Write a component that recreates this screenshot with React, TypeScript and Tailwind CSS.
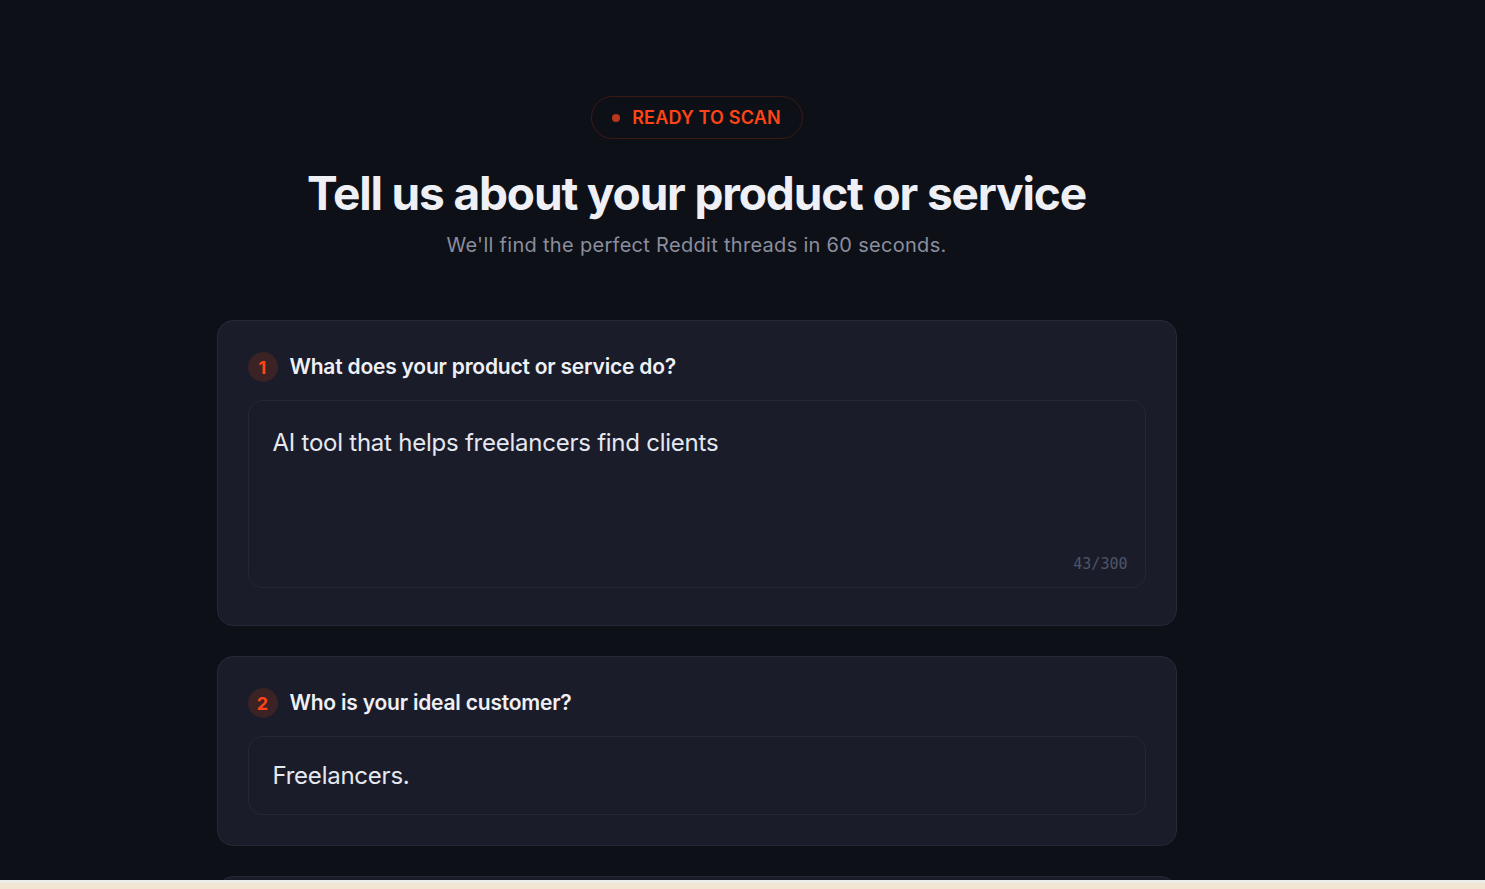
const font = { fontFamily: "Inter, 'Noto Sans', sans-serif" };

const Step = ({ n, title }: { n: number; title: string }) => (
  <div className="flex items-center gap-3 h-[30px]">
    <div className="w-[30px] h-[30px] shrink-0 rounded-full bg-[#3a2225] flex items-center justify-center text-[#ff4416] text-[18px] font-bold">
      {n}
    </div>
    <div className="text-[21px] font-semibold text-[#eef0f6] tracking-[-0.01em]">{title}</div>
  </div>
);

export default function App() {
  return (
    <div className="h-[889px] overflow-hidden bg-[#0e1017] flex flex-col" style={font}>
      <div className="h-[880px] shrink-0 overflow-hidden">
        <div className="w-[1393px] pt-[96px] text-center">
          {/* badge */}
          <div className="mx-auto h-[43px] w-[212px] rounded-full border border-[#3d1a15] flex items-center justify-center gap-3">
            <span className="w-[8px] h-[8px] rounded-full bg-[#b8371b]"></span>
            <span className="text-[#ff4416] text-[18px] font-semibold tracking-[0.01em]">READY TO SCAN</span>
          </div>

          <h1 className="mt-[26px] text-[46px] leading-[56px] font-bold text-[#eef0f6] tracking-[-0.025em]">
            Tell us about your product or service
          </h1>
          <p className="mt-[10px] text-[20px] leading-[28px] text-[#8a8e9e] tracking-[0.015em]">
            We'll find the perfect Reddit threads in 60 seconds.
          </p>

          <div className="mx-auto mt-[61px] w-[960px] flex flex-col gap-[30px] text-left">
            {/* card 1 */}
            <div className="rounded-[16px] border border-[#262938] bg-[#1a1c29] px-[30px] pt-[31px] pb-[37px]">
              <Step n={1} title="What does your product or service do?" />
              <div className="mt-[18px] relative h-[188px] rounded-[14px] border border-[#242736] bg-[#1a1c2a] px-[24px] pt-[26px]">
                <div className="text-[24px] leading-[32px] text-[#e6e8f0] tracking-[-0.01em]">
                  AI tool that helps freelancers find clients
                </div>
                <div
                  className="absolute right-[17px] bottom-[12px] text-[15px] text-[#4f5466]"
                  style={{ fontFamily: "'DejaVu Sans Mono', monospace" }}
                >
                  43/300
                </div>
              </div>
            </div>

            {/* card 2 */}
            <div className="rounded-[16px] border border-[#262938] bg-[#1a1c29] px-[30px] pt-[31px] pb-[30px]">
              <Step n={2} title="Who is your ideal customer?" />
              <div className="mt-[18px] h-[79px] rounded-[14px] border border-[#242736] bg-[#1a1c2a] px-[24px] flex items-center">
                <div className="text-[24px] leading-[32px] text-[#e6e8f0] tracking-[-0.01em]">Freelancers.</div>
              </div>
            </div>

            {/* card 3 (cut off) */}
            <div className="h-[200px] shrink-0 rounded-[16px] border border-[#262938] bg-[#1a1c29]"></div>
          </div>
        </div>
      </div>
      <div className="h-[3px] shrink-0 bg-[#ececec]"></div>
      <div className="h-[6px] shrink-0 bg-[#f2e5d1]"></div>
    </div>
  );
}
